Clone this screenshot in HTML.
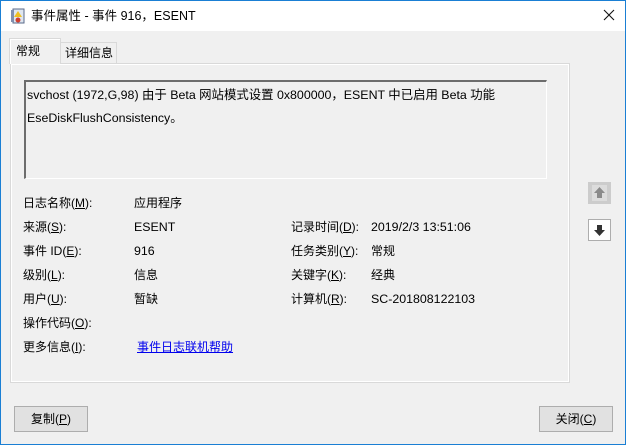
<!DOCTYPE html><html><head><meta charset="utf-8"><style>
*{margin:0;padding:0;box-sizing:border-box}
body{width:626px;height:445px;overflow:hidden;background:#f0f0f0;font-family:"Liberation Sans","Noto Sans CJK SC",sans-serif;font-size:12px;color:#000;position:relative}
.win{position:absolute;left:0;top:0;width:626px;height:445px;border:1px solid #1a7fd4}
.title{position:absolute;left:1px;top:1px;width:624px;height:30px;background:#fff}
.t{position:absolute;white-space:nowrap;line-height:16px}
.tab{position:absolute;border:1px solid #d9d9d9;border-bottom:none}
.panel{position:absolute;left:10px;top:63px;width:560px;height:320px;border:1px solid #d9d9d9;box-shadow:inset 1px 1px 0 #fff,inset -1px -1px 0 #fff}
.box{position:absolute;left:24px;top:80px;width:523px;height:99px;border-top:2px solid #6d6d6d;border-left:2px solid #6d6d6d;border-right:1px solid #fff;border-bottom:1px solid #fff}
.btn{position:absolute;height:26px;border:1px solid #adadad;background:#e1e1e1;text-align:center;line-height:24px}
.ab{position:absolute;left:588px;width:23px;height:22px;border:1px solid #adadad;background:#e1e1e1}
u{text-decoration:underline}
.l{font-size:12.4px}
</style></head><body>
<div class="win"></div>
<div class="title"></div>
<svg style="position:absolute;left:11px;top:8px" width="14" height="16"><rect x="2" y="1" width="11" height="14" fill="#dfe6f0" stroke="#5a6a8a"/><rect x="0" y="2" width="3" height="12" fill="#8090b0"/><path d="M7 3 L11 9 L3 9Z" fill="#f0c020"/><circle cx="7" cy="12" r="2.5" fill="#d04030"/></svg>
<div class="t" style="left:31px;top:8px;font-size:12.5px">事件属性 - 事件 916，ESENT</div>
<svg style="position:absolute;left:603px;top:9px" width="12" height="12"><path d="M1 1L11 11M11 1L1 11" stroke="#111" stroke-width="1.1"/></svg>
<div class="tab" style="left:60px;top:42px;width:57px;height:21px;background:#f0f0f0"></div>
<div class="t" style="left:65px;top:45px">详细信息</div>
<div class="panel"></div>
<div class="tab" style="left:9px;top:38px;width:52px;height:26px;background:#f0f0f0;box-shadow:inset 1px 1px 0 #fff"></div>
<div class="t" style="left:16px;top:43px">常规</div>
<div class="box"></div>
<div class="t l" style="left:27px;top:87px">svchost (1972,G,98) 由于 Beta 网站模式设置 0x800000，ESENT 中已启用 Beta 功能</div>
<div class="t l" style="left:27px;top:110px">EseDiskFlushConsistency。</div>
<div class="t" style="left:23px;top:195px">日志名称(<u>M</u>):</div><div class="t" style="left:134px;top:195px">应用程序</div>
<div class="t" style="left:23px;top:219px">来源(<u>S</u>):</div><div class="t l" style="left:134px;top:219px">ESENT</div>
<div class="t" style="left:23px;top:243px">事件 ID(<u>E</u>):</div><div class="t l" style="left:134px;top:243px">916</div>
<div class="t" style="left:23px;top:267px">级别(<u>L</u>):</div><div class="t" style="left:134px;top:267px">信息</div>
<div class="t" style="left:23px;top:291px">用户(<u>U</u>):</div><div class="t" style="left:134px;top:291px">暂缺</div>
<div class="t" style="left:23px;top:315px">操作代码(<u>O</u>):</div>
<div class="t" style="left:23px;top:339px">更多信息(<u>I</u>):</div><div class="t" style="left:137px;top:339px;color:#0000ee;text-decoration:underline">事件日志联机帮助</div>
<div class="t" style="left:291px;top:219px">记录时间(<u>D</u>):</div><div class="t l" style="left:371px;top:219px">2019/2/3 13:51:06</div>
<div class="t" style="left:291px;top:243px">任务类别(<u>Y</u>):</div><div class="t" style="left:371px;top:243px">常规</div>
<div class="t" style="left:291px;top:267px">关键字(<u>K</u>):</div><div class="t" style="left:371px;top:267px">经典</div>
<div class="t" style="left:291px;top:291px">计算机(<u>R</u>):</div><div class="t l" style="left:371px;top:291px">SC-201808122103</div>
<div class="ab" style="top:182px;background:#ccc;border-color:#ccc"><svg width="21" height="20"><rect x="3" y="2" width="15" height="16" fill="#dcdcdc"/><path d="M10.5 4 L16 10 L13 10 L13 15 L8 15 L8 10 L5 10Z" fill="#8a8a8a"/></svg></div>
<div class="ab" style="top:219px;background:#fff"><svg width="21" height="20"><path d="M10.5 16 L16 10 L13 10 L13 5 L8 5 L8 10 L5 10Z" fill="#333"/></svg></div>
<div class="btn" style="left:14px;top:406px;width:74px">复制(<u>P</u>)</div>
<div class="btn" style="left:539px;top:406px;width:74px">关闭(<u>C</u>)</div>
</body></html>
